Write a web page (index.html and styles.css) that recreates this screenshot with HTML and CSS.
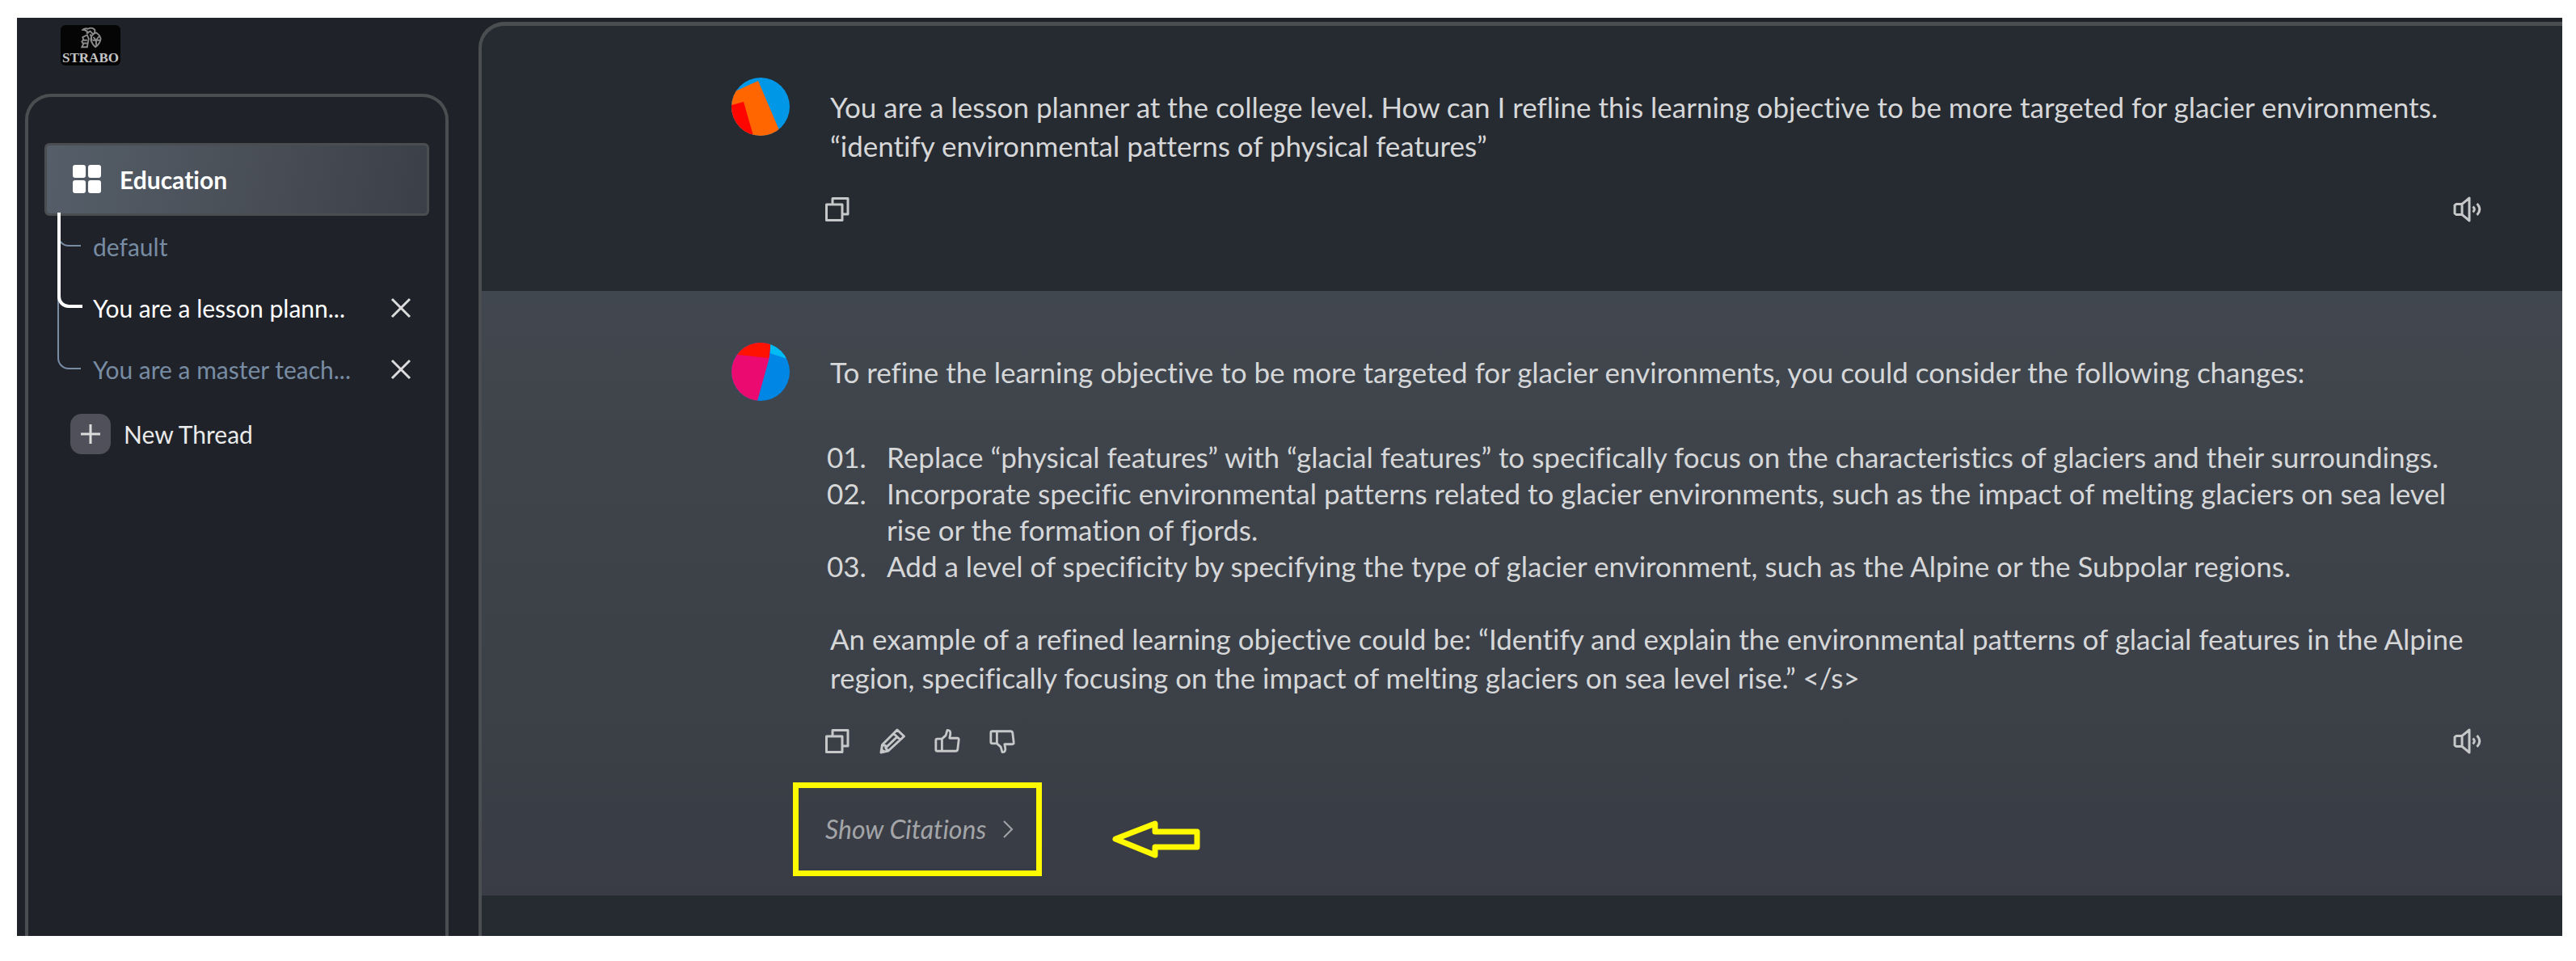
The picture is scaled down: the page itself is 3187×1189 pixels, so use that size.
FILE: index.html
```html
<!DOCTYPE html>
<html lang="en">
<head>
    <meta charset="UTF-8">
    <meta name="viewport" content="width=device-width, initial-scale=1.0">
    <title>Strabo - Education</title>
    <link rel="stylesheet" href="styles.css">
</head>
<body>
    <!-- Shared icons -->
    <svg class="sprite" aria-hidden="true">
        <symbol id="icon-copy" viewBox="0 0 34 34">
            <path d="M11 10V3.500h19V23h-6M3.500 11H23v19.500H3.500z"/>
        </symbol>
        <symbol id="icon-speaker" viewBox="0 0 38 34">
            <path d="M5 10.500H12L21 3v28L12 23.500H5L3 22V12zM12 10.500v13M25.500 13.500q3.500 3.500 0 7M30.500 10q6.500 7 0 14"/>
        </symbol>
        <symbol id="icon-pencil" viewBox="0 0 34 34">
            <path d="M23 3l8.500 8L12 29l-9 2 1.500-9.500zM18.500 7.500l8.500 8M4.500 21.500l4 1 .5 3.500 3 3M22.500 12L9 25M4 27.500l3 3"/>
        </symbol>
        <symbol id="icon-thumb" viewBox="0 0 36 34">
            <path d="M11 14l5-4.500 2-7q4.500 0 4 5l-1 5.500h10q2.500 0 2 2.500L31.500 28q-.5 2-2.500 2H11zM11 14H5q-2 0-2 2v12q0 2 2 2h6z"/>
        </symbol>
    </svg>

    <div class="app">
        <aside class="sidebar">
            <a class="logo" href="#">
                <svg class="logo-mark" viewBox="0 0 30 30" aria-hidden="true">
                    <path d="M3 5q4-4 8-2 5-3 9 1 1 4-2 6l-4-4-5 3M5 4q5 1 7 5M4 14l6-3 2 5-2 11H3l2-4-2-3 2-3zM5 18h5M5 22h5M14 10q3 5 1 10M22 8q-8 3-7 10 2 6 6 9 6-4 7-11-1-5-6-8zM18 14q5 3 4 12M26 13q-5 4-4 10M17 18h10"/>
                </svg>
                <span>STRABO</span>
            </a>

            <nav class="panel">
                <button type="button" class="workspace">
                    <svg class="grid-icon" viewBox="0 0 36 36" aria-hidden="true">
                        <rect width="16" height="16" rx="3"/>
                        <rect x="19" width="16" height="16" rx="3"/>
                        <rect y="19" width="16" height="16" rx="3"/>
                        <rect x="19" y="19" width="16" height="16" rx="3"/>
                    </svg>
                    Education
                </button>

                <ul class="threads">
                    <li class="thread">
                        <a href="#">default</a>
                    </li>
                    <li class="thread active">
                        <a href="#">You are a lesson plann...</a>
                        <button type="button" class="close" aria-label="Delete thread">
                            <svg viewBox="0 0 26 26"><path d="M2 2l22 22M24 2L2 24"/></svg>
                        </button>
                    </li>
                    <li class="thread">
                        <a href="#">You are a master teach...</a>
                        <button type="button" class="close" aria-label="Delete thread">
                            <svg viewBox="0 0 26 26"><path d="M2 2l22 22M24 2L2 24"/></svg>
                        </button>
                    </li>
                </ul>

                <button type="button" class="new-thread">
                    <span class="plus">
                        <svg viewBox="0 0 24 24"><path d="M12 0v24M0 12h24"/></svg>
                    </span>
                    New Thread
                </button>
            </nav>
        </aside>

        <main class="chat">
            <section class="message">
                <svg class="avatar" viewBox="0 0 72 72" aria-hidden="true">
                    <clipPath id="round"><circle cx="36" cy="36" r="36"/></clipPath>
                    <g clip-path="url(#round)">
                        <rect width="72" height="72" fill="#0098e6"/>
                        <path d="M0 19L33 4 62 72H0z" fill="#ff6600"/>
                        <path d="M0 34l15-4 12 42H0z" fill="#ff0500"/>
                    </g>
                </svg>
                <div class="content">
                    <p>You are a lesson planner at the college level. How can I refline this learning objective to be more targeted for glacier environments.<br>“identify environmental patterns of physical features”</p>
                    <div class="actions">
                        <button type="button" aria-label="Copy"><svg class="icon"><use href="#icon-copy"/></svg></button>
                        <button type="button" class="speak" aria-label="Read aloud"><svg class="icon"><use href="#icon-speaker"/></svg></button>
                    </div>
                </div>
            </section>

            <section class="message reply">
                <svg class="avatar" viewBox="0 0 72 72" aria-hidden="true">
                    <g clip-path="url(#round)">
                        <rect width="72" height="72" fill="#0087e6"/>
                        <path d="M0 0h48l-1 18-15 54H0z" fill="#eb0b70"/>
                        <path d="M0 14l46 5 3-19H0z" fill="#ff1200"/>
                        <path d="M48 0h24v21l-24-8z" fill="#00bcf5"/>
                    </g>
                </svg>
                <div class="content">
                    <p>To refine the learning objective to be more targeted for glacier environments, you could consider the following changes:</p>
                    <ol class="steps">
                        <li>Replace “physical features” with “glacial features” to specifically focus on the characteristics of glaciers and their surroundings.</li>
                        <li>Incorporate specific environmental patterns related to glacier environments, such as the impact of melting glaciers on sea level<br>rise or the formation of fjords.</li>
                        <li>Add a level of specificity by specifying the type of glacier environment, such as the Alpine or the Subpolar regions.</li>
                    </ol>
                    <p>An example of a refined learning objective could be: “Identify and explain the environmental patterns of glacial features in the Alpine<br>region, specifically focusing on the impact of melting glaciers on sea level rise.” &lt;/s&gt;</p>
                    <div class="actions">
                        <button type="button" aria-label="Copy"><svg class="icon"><use href="#icon-copy"/></svg></button>
                        <button type="button" aria-label="Edit"><svg class="icon"><use href="#icon-pencil"/></svg></button>
                        <button type="button" aria-label="Like"><svg class="icon"><use href="#icon-thumb"/></svg></button>
                        <button type="button" aria-label="Dislike"><svg class="icon flip"><use href="#icon-thumb"/></svg></button>
                        <button type="button" class="speak" aria-label="Read aloud"><svg class="icon"><use href="#icon-speaker"/></svg></button>
                    </div>
                    <div class="callout">
                        <button type="button" class="citations">
                            Show Citations
                            <svg class="chevron" viewBox="0 0 14 22" aria-hidden="true"><path d="M2 1l10 10L2 21"/></svg>
                        </button>
                        <svg class="arrow" viewBox="0 0 110 48" aria-hidden="true">
                            <path d="M5 24L54 5v10h52v19H54v10z"/>
                        </svg>
                    </div>
                </div>
            </section>
        </main>
    </div>
</body>
</html>
```

FILE: styles.css
```css
* {
    margin: 0;
    padding: 0;
    box-sizing: border-box;
}

:root {
    --bg-color: #1f2229;
    --chat-color: #262a31;
    --border-color: #4b4e50;
    --text-color: #d6d7d8;
    --muted-color: #788ca3;
    --highlight: #fffa00;
}

body {
    background: white;
    padding: 22px 17px 31px 21px;
    font-family: Lato, sans-serif;
    font-size: 35px;
    font-variant-ligatures: none;
    color: var(--text-color);
}

button {
    background: none;
    border: none;
    font: inherit;
    font-variant-ligatures: none;
    color: inherit;
    cursor: pointer;
}

a {
    color: inherit;
    text-decoration: none;
}

svg {
    display: block;
    flex-shrink: 0;
}

.sprite {
    position: absolute;
    width: 0;
    height: 0;
}

.app {
    display: flex;
    min-height: calc(100vh - 53px);
    background: var(--bg-color);
}

/* Sidebar */
.sidebar {
    display: flex;
    flex-direction: column;
    width: 571px;
    flex-shrink: 0;
    padding: 9px 37px 0 10px;
    font-size: 30px;
}

.logo {
    display: flex;
    flex-direction: column;
    align-items: center;
    justify-content: space-between;
    width: 74px;
    height: 50px;
    margin: 0 0 35px 44px;
    padding-top: 2px;
    border-radius: 6px;
    background: #050506;
    color: #c4c4c4;
    font-family: "Liberation Serif", serif;
    font-size: 17px;
    font-weight: bold;
    line-height: 18px;
}

.logo-mark {
    width: 29px;
    height: 28px;
    fill: none;
    stroke: #8c8c8c;
    stroke-width: 2;
}

.panel {
    flex: 1;
    padding: 57px 20px 0;
    border: 4px solid var(--border-color);
    border-bottom: none;
    border-radius: 32px 32px 0 0;
}

.workspace {
    display: flex;
    align-items: center;
    gap: 22px;
    width: 100%;
    height: 90px;
    padding: 0 32px;
    border: 3px solid var(--border-color);
    border-radius: 6px;
    background: linear-gradient(100deg, #555e69, #4a5058 50%, #3a3f48);
    color: white;
    font-weight: bold;
}

.grid-icon {
    width: 36px;
    height: 36px;
    fill: white;
}

.threads {
    list-style: none;
    color: var(--muted-color);
}

.thread {
    position: relative;
    display: flex;
    align-items: center;
    justify-content: space-between;
    height: 76px;
    padding: 0 22px 0 60px;
}

/* Branch lines from the workspace down to each thread */
.thread::before {
    content: "";
    position: absolute;
    left: 16px;
    bottom: 38px;
    width: 27px;
    height: 38px;
    border: solid var(--muted-color);
    border-width: 0 0 2px 2px;
    border-bottom-left-radius: 14px;
}

.thread:nth-child(2)::before {
    height: 114px;
}

.thread:nth-child(3)::before {
    height: 190px;
}

.thread.active {
    z-index: 1;
    color: white;
}

.thread.active::before {
    border-color: white;
    border-width: 0 0 4px 4px;
}

.close svg {
    width: 26px;
    height: 26px;
    fill: none;
    stroke: #dcdcdc;
    stroke-width: 3;
}

.new-thread {
    display: flex;
    align-items: center;
    gap: 16px;
    margin: 17px 0 0 32px;
    color: #eaeaea;
}

.plus {
    display: flex;
    align-items: center;
    justify-content: center;
    width: 50px;
    height: 50px;
    border-radius: 14px;
    background: #50505a;
}

.plus svg {
    width: 24px;
    height: 24px;
    stroke: #dcdcdc;
    stroke-width: 3;
}

/* Chat */
.chat {
    flex: 1;
    margin-top: 5px;
    border: solid var(--border-color);
    border-width: 5px 0 0 4px;
    border-radius: 32px 0 0 0;
    background: var(--chat-color);
}

.message {
    display: flex;
    gap: 50px;
    padding: 64px 98px 84px 309px;
}

.reply {
    padding-bottom: 24px;
    background: linear-gradient(#41474e, #393c44);
}

.avatar {
    width: 72px;
    height: 72px;
}

.content {
    flex: 1;
    padding-top: 12px;
    line-height: 48px;
}

.content p {
    white-space: nowrap;
}

.steps {
    margin: 59px 0 43px -4px;
    line-height: 45px;
    list-style: none;
    counter-reset: step;
    white-space: nowrap;
}

.steps li {
    position: relative;
    padding-left: 74px;
    counter-increment: step;
}

.steps li::before {
    content: counter(step, decimal-leading-zero) ".";
    position: absolute;
    left: 0;
}

.actions {
    display: flex;
    gap: 34px;
    margin: 38px 0 0 -8px;
}

.speak {
    margin-left: auto;
}

.icon {
    width: 34px;
    height: 34px;
    fill: none;
    stroke: #c6c7c9;
    stroke-width: 3;
    stroke-linejoin: round;
}

.speak .icon {
    width: 38px;
}

.flip {
    transform: scaleY(-1);
}

.callout {
    display: flex;
    align-items: center;
    gap: 86px;
    margin: 34px 0 0 -46px;
}

.citations {
    display: flex;
    align-items: center;
    justify-content: space-between;
    width: 308px;
    height: 116px;
    padding: 0 28px 0 33px;
    border: 7px solid var(--highlight);
    color: #a3a5a8;
    font-size: 32px;
    font-style: italic;
}

.chevron {
    width: 14px;
    height: 22px;
    fill: none;
    stroke: #a3a5a8;
    stroke-width: 2;
}

.arrow {
    width: 110px;
    height: 48px;
    margin-top: 24px;
    fill: none;
    stroke: var(--highlight);
    stroke-width: 7;
    stroke-linejoin: round;
}
```
